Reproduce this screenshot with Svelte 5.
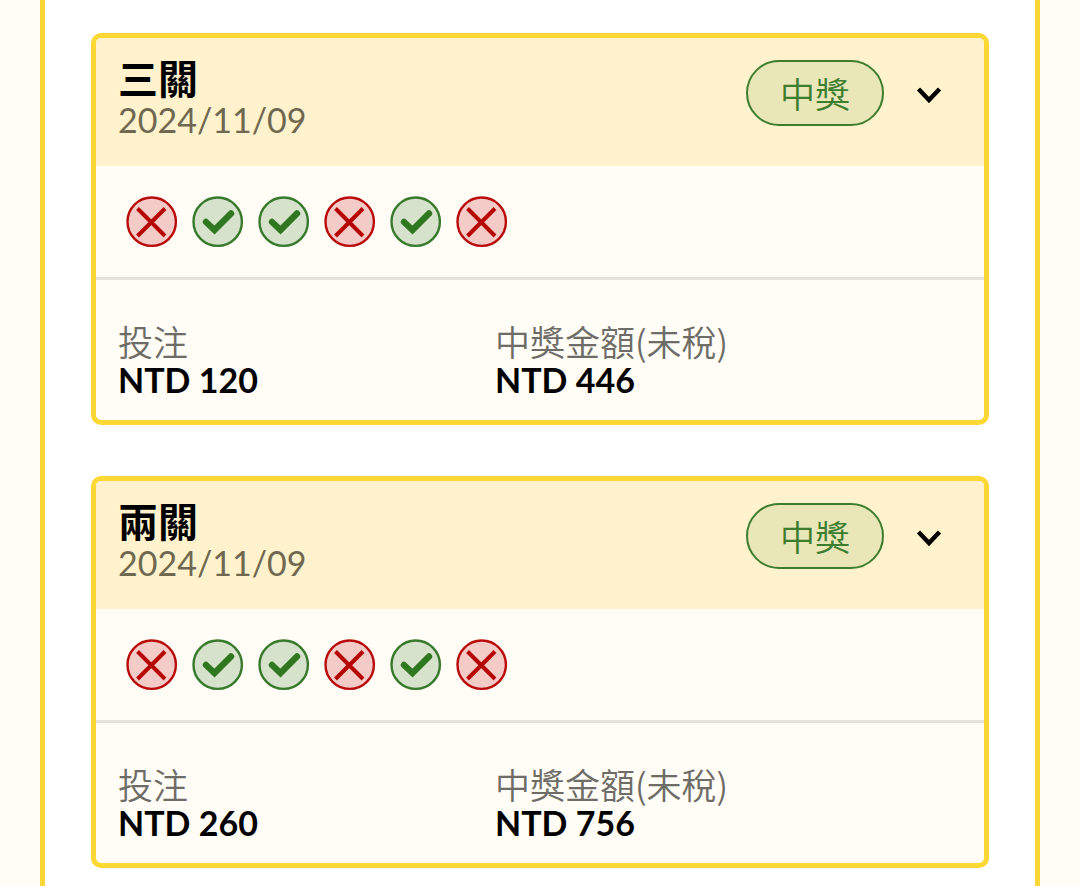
<script>
  const bets = [
    { id: 'three', title: '三關', date: '2024/11/09', status: '中獎', results: [0, 1, 1, 0, 1, 0], stake: 120, prize: 446 },
    { id: 'two', title: '兩關', date: '2024/11/09', status: '中獎', results: [0, 1, 1, 0, 1, 0], stake: 260, prize: 756 }
  ];
</script>

<main class="panel">
  {#each bets as bet (bet.id)}
    <article class="card">
      <header class="head">
        <div class="heading">
          <h2>{bet.title}</h2>
          <time>{bet.date}</time>
        </div>
        <span class="badge">{bet.status}</span>
        <button class="toggle" type="button" aria-label={bet.title}>
          <svg viewBox="0 0 26 18" width="26" height="18" aria-hidden="true">
            <path d="M2.5 3 L13 14 L23.5 3" fill="none" stroke="#000" stroke-width="4.4" />
          </svg>
        </button>
      </header>
      <ul class="results">
        {#each bet.results as won}
          <li>
            <svg viewBox="0 0 52 52" width="52" height="52" aria-hidden="true">
              {#if won}
                <circle cx="25.7" cy="25.7" r="24.2" fill="#d7e2cd" stroke="#387a2c" stroke-width="2.4" />
                <path d="M14 26 L22.5 34 L39 17.5" fill="none" stroke="#2f7820" stroke-width="6.4" stroke-linecap="round" />
              {:else}
                <circle cx="25.7" cy="25.7" r="24.2" fill="#f5cbc7" stroke="#b90b0b" stroke-width="2.4" />
                <path d="M11.5 12.5 L39 40 M39 12.5 L11.5 40" fill="none" stroke="#b60505" stroke-width="4" />
              {/if}
            </svg>
          </li>
        {/each}
      </ul>
      <dl class="amounts">
        <div>
          <dt>投注</dt>
          <dd>NTD {bet.stake}</dd>
        </div>
        <div>
          <dt>中獎金額(未稅)</dt>
          <dd>NTD {bet.prize}</dd>
        </div>
      </dl>
    </article>
  {/each}
</main>

<style>
  :global(body) {
    margin: 0;
    background: #fffdf5;
  }

  .panel {
    box-sizing: border-box;
    display: flex;
    flex-direction: column;
    gap: 51px;
    min-height: 100vh;
    margin: 0 40px;
    padding: 33px 46px 18px;
    border: solid #fdd835;
    border-width: 0 5px;
    background: #fff;
    color: #000;
    font-family: Lato, 'Noto Sans CJK TC', sans-serif;
    font-size: 35px;
    line-height: 38px;
  }

  .card {
    border: 5px solid #fdd835;
    border-radius: 10px;
    background: #fffdf5;
    overflow: hidden;
  }

  .head {
    display: flex;
    align-items: flex-start;
    padding: 20px 40px 26px 22px;
    background: #fff2cc;
  }

  .heading {
    flex: 1;
  }

  h2 {
    margin: 0;
    font-size: 40px;
    font-weight: 700;
    line-height: 42px;
  }

  time {
    display: block;
    color: #6f6850;
    font-size: 34px;
    line-height: 40px;
  }

  .badge {
    margin-top: 2px;
    padding: 12px 32px;
    border: 2px solid #3c7d2e;
    border-radius: 33px;
    background: #e9e6b8;
    color: #3c7d2e;
    font-family: 'Noto Sans CJK TC DemiLight', 'Noto Sans CJK TC', sans-serif;
    font-weight: 350;
  }

  .toggle {
    display: flex;
    margin: 4px 0 0 28px;
    padding: 24px 2px 24px 4px;
    border: 0;
    background: none;
  }

  .results {
    display: flex;
    gap: 14px;
    margin: 0;
    padding: 30px 30px 29px;
    border-bottom: 3px solid #e5e2dc;
    list-style: none;
  }

  .results li,
  .results svg {
    display: block;
  }

  .amounts {
    display: grid;
    grid-template-columns: 377px 1fr;
    margin: 0;
    padding: 41px 22px 21px;
  }

  dt {
    color: #6e6c66;
    font-family: 'Noto Sans CJK TC DemiLight', 'Noto Sans CJK TC', sans-serif;
    font-weight: 350;
    line-height: 40px;
  }

  dd {
    margin: 0;
    font-size: 34px;
    font-weight: 700;
    line-height: 38px;
  }
</style>
